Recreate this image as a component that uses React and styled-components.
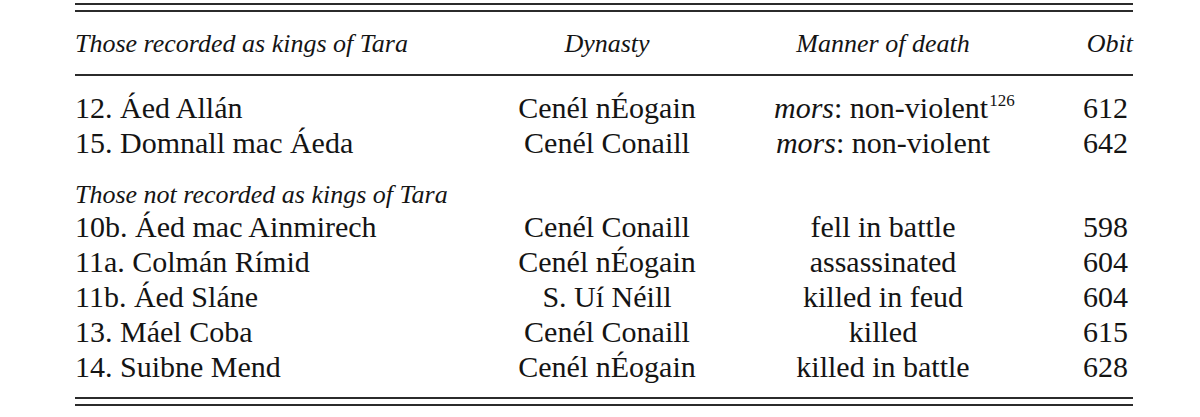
import React from "react";
import styled, { createGlobalStyle } from "styled-components";

const Global = createGlobalStyle`
  html, body { margin: 0; padding: 0; background: #ffffff; }
  body { font-family: "Liberation Serif", "Times New Roman", serif; color: #141414; }
`;

const Page = styled.div`
  width: 1200px;
  height: 417px;
  padding: 3px 67px 0 75px;
  box-sizing: border-box;
`;

const Table = styled.div`
  width: 1058px;
  display: flex;
  flex-direction: column;
`;

const DoubleRule = styled.div`
  height: 5px;
  border-top: 2px solid #2b2b2b;
  border-bottom: 2px solid #2b2b2b;
  margin-top: ${(p) => p.$top || 0}px;
`;

const cols = "365px 334px 218px 141px";

const HeaderRow = styled.div`
  display: grid;
  grid-template-columns: ${cols};
  padding-top: 2px;
  border-bottom: 2px solid #2b2b2b;
  font-style: italic;
  font-size: 26px;
  line-height: 60px;
`;

const Row = styled.div`
  display: grid;
  grid-template-columns: ${cols};
  font-size: 30px;
  line-height: 35px;
  margin-top: ${(p) => p.$top || 0}px;
`;

const Cell = styled.div`
  white-space: nowrap;
  text-align: ${(p) => p.$align || "left"};
  padding-right: ${(p) => p.$pr || 0}px;
`;

const SubHeading = styled.div`
  font-style: italic;
  font-size: 26px;
  line-height: 28px;
  margin-top: ${(p) => p.$top || 0}px;
  white-space: nowrap;
`;

const Em = styled.span`
  font-style: italic;
`;

const Note = styled.sup`
  font-size: 17px;
  line-height: 0;
  vertical-align: 12px;
  margin-left: 1px;
`;

const Group = styled.div`
  display: flex;
  flex-direction: column;
`;

const recorded = [
  { name: "12. Áed Allán", dyn: "Cenél nÉogain", death: <><Em>mors</Em>: non-violent<Note>126</Note></>, obit: "612" },
  { name: "15. Domnall mac Áeda", dyn: "Cenél Conaill", death: <><Em>mors</Em>: non-violent</>, obit: "642" },
];

const notRecorded = [
  { name: "10b. Áed mac Ainmirech", dyn: "Cenél Conaill", death: "fell in battle", obit: "598" },
  { name: "11a. Colmán Rímid", dyn: "Cenél nÉogain", death: "assassinated", obit: "604" },
  { name: "11b. Áed Sláne", dyn: "S. Uí Néill", death: "killed in feud", obit: "604" },
  { name: "13. Máel Coba", dyn: "Cenél Conaill", death: "killed", obit: "615" },
  { name: "14. Suibne Mend", dyn: "Cenél nÉogain", death: "killed in battle", obit: "628" },
];

function KingRow({ r, top }) {
  return (
    <Row $top={top}>
      <Cell>{r.name}</Cell>
      <Cell $align="center">{r.dyn}</Cell>
      <Cell $align="center">{r.death}</Cell>
      <Cell $align="right" $pr={5}>{r.obit}</Cell>
    </Row>
  );
}

export default function App() {
  return (
    <Page>
      <Global />
      <Table>
        <DoubleRule />
        <HeaderRow>
          <Cell>Those recorded as kings of Tara</Cell>
          <Cell $align="center">Dynasty</Cell>
          <Cell $align="center">Manner of death</Cell>
          <Cell $align="right">Obit</Cell>
        </HeaderRow>
        <Group>
          {recorded.map((r, i) => (
            <KingRow key={r.name} r={r} top={i === 0 ? 14 : 0} />
          ))}
        </Group>
        <SubHeading $top={21}>Those not recorded as kings of Tara</SubHeading>
        <Group>
          {notRecorded.map((r) => (
            <KingRow key={r.name} r={r} />
          ))}
        </Group>
        <DoubleRule $top={13} />
      </Table>
    </Page>
  );
}
